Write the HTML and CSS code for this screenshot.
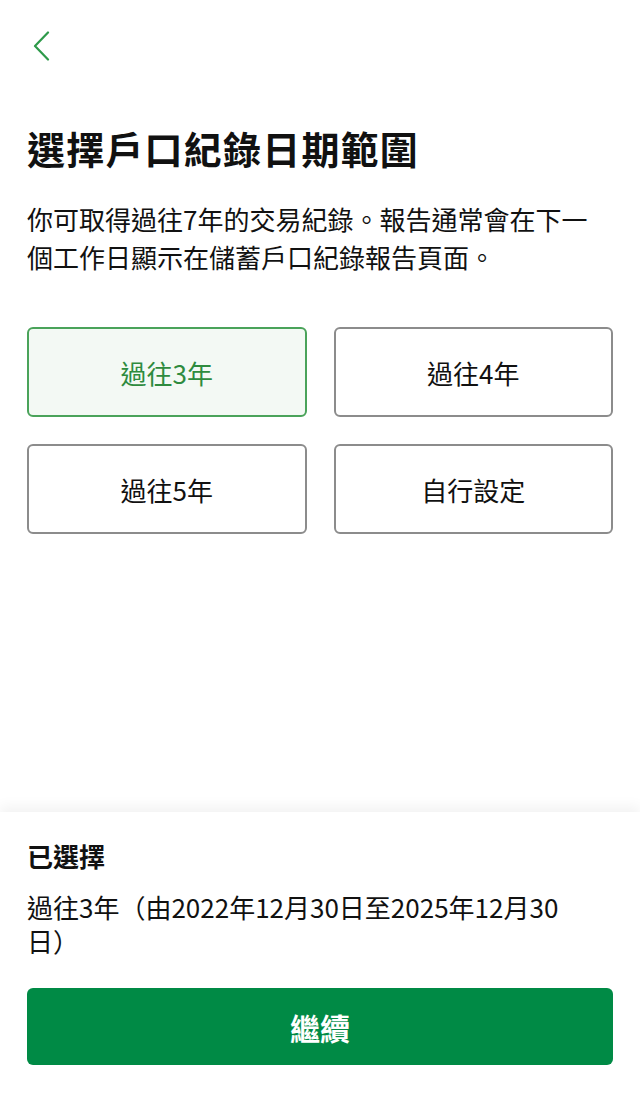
FILE: index.html
```html
<!DOCTYPE html>
<html lang="zh-Hant">
<head>
    <meta charset="UTF-8">
    <meta name="viewport" content="width=device-width, initial-scale=1.0">
    <title>選擇戶口紀錄日期範圍</title>
    <link rel="stylesheet" href="styles.css">
</head>
<body>
    <div class="page">
        <main class="content">
            <button class="back" aria-label="返回">
                <svg width="18" height="30" viewBox="0 0 18 30">
                    <path d="M15 1.5 L2 15 L15 28.5" fill="none" stroke="#2e9a4a" stroke-width="2.2" stroke-linecap="round" stroke-linejoin="round"/>
                </svg>
            </button>

            <h1>選擇戶口紀錄日期範圍</h1>
            <p class="intro">你可取得過往7年的交易紀錄。報告通常會在下一個工作日顯示在儲蓄戶口紀錄報告頁面。</p>

            <div class="options">
                <button class="option selected">過往3年</button>
                <button class="option">過往4年</button>
                <button class="option">過往5年</button>
                <button class="option">自行設定</button>
            </div>
        </main>

        <footer class="sheet">
            <h2>已選擇</h2>
            <p class="summary">過往3年（由2022年12月30日至2025年12月30日）</p>
            <button class="continue">繼續</button>
        </footer>
    </div>
</body>
</html>
```

FILE: styles.css
```css
body {
    margin: 0;
    font-family: "Noto Sans CJK TC", "Noto Sans", sans-serif;
    color: #111;
    background-color: #fff;
}
button {
    font-family: inherit;
    cursor: pointer;
}
.page {
    height: 1100px;
    display: flex;
    flex-direction: column;
}
.content {
    padding: 0 27px;
}
.back {
    display: block;
    background: none;
    border: none;
    padding: 0;
    margin: 31px 0 0 6px;
    width: 18px;
    height: 30px;
}
.back svg {
    display: block;
}
h1 {
    font-size: 38px;
    font-weight: 700;
    line-height: 50px;
    margin: 62px 0 0;
    letter-spacing: 1.2px;
}
.intro {
    font-size: 26px;
    line-height: 38px;
    margin: 27px 0 0;
    padding-right: 10px;
}
.options {
    display: grid;
    grid-template-columns: 1fr 1fr;
    gap: 27px;
    margin-top: 51px;
}
.option {
    height: 90px;
    background-color: #fff;
    border: 2px solid #8c8c8c;
    border-radius: 6px;
    font-size: 26px;
    color: #111;
}
.option.selected {
    border-color: #4aa35a;
    background-color: #f3f9f4;
    color: #2e8b3e;
}
.sheet {
    margin-top: auto;
    padding: 24px 27px 35px;
    background-color: #fff;
    box-shadow: 0 -6px 12px rgba(0, 0, 0, 0.05);
}
.sheet h2 {
    font-size: 26px;
    font-weight: 700;
    line-height: 40px;
    margin: 0;
}
.summary {
    font-size: 26px;
    line-height: 34px;
    margin: 14px 0 0;
    padding-right: 40px;
}
.continue {
    display: block;
    width: 100%;
    height: 77px;
    margin-top: 30px;
    background-color: #008a45;
    color: #fff;
    border: none;
    border-radius: 6px;
    font-size: 30px;
    font-weight: 700;
}
```
